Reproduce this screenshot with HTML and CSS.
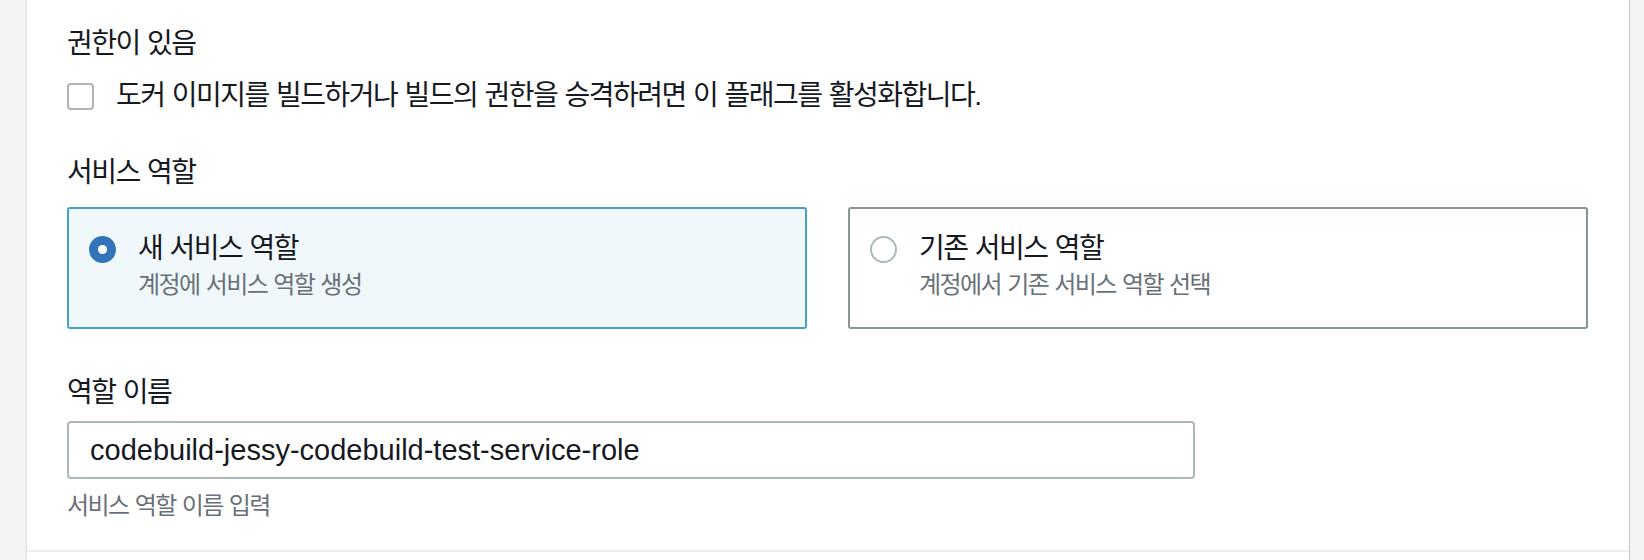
FILE: index.html
```html
<!DOCTYPE html>
<html lang="ko">
<head>
<meta charset="utf-8">
<title>서비스 역할</title>
<link rel="stylesheet" href="styles.css">
</head>
<body>
<div class="page">
  <div class="card">
    <div class="section">
      <div class="field">
        <div class="label ko">권한이 있음</div>
        <label class="check-row">
          <span class="checkbox"></span>
          <span class="ko check-text">도커 이미지를 빌드하거나 빌드의 권한을 승격하려면 이 플래그를 활성화합니다.</span>
        </label>
      </div>

      <div class="field field-role">
        <div class="label ko">서비스 역할</div>
        <div class="tiles">
          <div class="tile selected">
            <span class="radio checked"><span class="dot"></span></span>
            <div class="tile-text">
              <div class="tile-title ko">새 서비스 역할</div>
              <div class="tile-desc ko">계정에 서비스 역할 생성</div>
            </div>
          </div>
          <div class="tile">
            <span class="radio"></span>
            <div class="tile-text">
              <div class="tile-title ko">기존 서비스 역할</div>
              <div class="tile-desc ko">계정에서 기존 서비스 역할 선택</div>
            </div>
          </div>
        </div>
      </div>

      <div class="field field-name">
        <div class="label ko">역할 이름</div>
        <div class="input">codebuild-jessy-codebuild-test-service-role</div>
        <div class="hint ko">서비스 역할 이름 입력</div>
      </div>
    </div>
  </div>
</div>
</body>
</html>
```

FILE: styles.css
```css
html, body {
  margin: 0;
  padding: 0;
}

body {
  background: #f2f3f3;
  font-family: "Liberation Sans", "Noto Sans CJK KR", sans-serif;
  color: #16191f;
}

.page {
  height: 560px;
  overflow: hidden;
  display: flex;
  padding: 0 15px 0 27px;
}

.card {
  flex: 1;
  background: #ffffff;
  box-shadow: -1px 0 0 0 #dde1e1, 1px 0 0 0 #c4cacb;
}

.section {
  padding: 24px 41px 28px 40px;
  border-bottom: 2px solid #eaeded;
}

.ko {
  letter-spacing: -0.055em;
  word-spacing: 0.04em;
}

.label {
  font-size: 28px;
  line-height: 40px;
}

.check-row {
  display: flex;
  align-items: center;
  gap: 22px;
  margin-top: 12px;
  height: 40px;
}

.checkbox {
  box-sizing: border-box;
  width: 27px;
  height: 27px;
  border: 2px solid #aab7b8;
  border-radius: 4px;
  background: #fff;
  flex: none;
}

.check-text {
  font-size: 28px;
  line-height: 40px;
}

.field-role {
  margin-top: 37px;
}

.tiles {
  margin-top: 14px;
  display: grid;
  grid-template-columns: 1fr 1fr;
  gap: 41px;
}

.tile {
  box-sizing: border-box;
  height: 122px;
  border: 2px solid #879596;
  border-radius: 3px;
  background: #ffffff;
  padding: 20px 20px 26px 20px;
  display: flex;
  align-items: flex-start;
  gap: 22px;
}

.tile.selected {
  border-color: #46a1cb;
  background: #f1f8fc;
}

.radio {
  box-sizing: border-box;
  flex: none;
  width: 27px;
  height: 27px;
  margin-top: 6.5px;
  border-radius: 50%;
  border: 2px solid #aab7b8;
  background: #fff;
  display: flex;
  align-items: center;
  justify-content: center;
}

.radio.checked {
  border: none;
  background: #3174ba;
}

.radio .dot {
  width: 9px;
  height: 9px;
  border-radius: 50%;
  background: #ffffff;
}

.tile-title {
  font-size: 28px;
  line-height: 40px;
  color: #16191f;
}

.tile-desc {
  font-size: 24px;
  line-height: 32px;
  letter-spacing: -0.065em;
  color: #687078;
}

.field-name {
  margin-top: 44px;
}

.input {
  box-sizing: border-box;
  margin-top: 8px;
  width: 1128px;
  height: 58px;
  border: 2px solid #aab7b8;
  border-radius: 4px;
  padding: 0 21px;
  display: flex;
  align-items: center;
  font-size: 29px;
  color: #16191f;
}

.hint {
  margin-top: 11px;
  font-size: 24px;
  line-height: 32px;
  letter-spacing: -0.065em;
  color: #687078;
}
```
